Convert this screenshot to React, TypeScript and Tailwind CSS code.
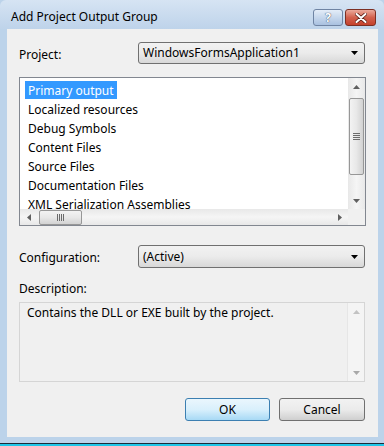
import React from 'react'

const items = [
    'Primary output',
    'Localized resources',
    'Debug Symbols',
    'Content Files',
    'Source Files',
    'Documentation Files',
    'XML Serialization Assemblies',
]

const font = { fontFamily: '"Noto Sans", "Open Sans", sans-serif' }

// small triangle used by combos and scrollbars
const Arrow = ({ dir, color = '#000', size = 7 }: { dir: 'up' | 'down' | 'left' | 'right'; color?: string; size?: number }) => {
    const pts = {
        up: '0,4 3.5,0 7,4',
        down: '0,0 7,0 3.5,4',
        left: '4,0 4,7 0,3.5',
        right: '0,0 0,7 4,3.5',
    }[dir]
    const vertical = dir === 'up' || dir === 'down'
    return (
        <svg width={vertical ? size : 4} height={vertical ? 4 : size} viewBox={vertical ? '0 0 7 4' : '0 0 4 7'}>
            <polygon points={pts} fill={color} />
        </svg>
    )
}

const Combo = ({ value }: { value: string }) => (
    <div className="flex h-full w-[227px] items-center justify-between rounded-[3px] border border-[#707070] bg-gradient-to-b from-[#f2f2f2] via-[#ebebeb] to-[#d8d8d8] pl-[4px] pr-[6px] text-[12px] text-black">
        <span>{value}</span>
        <Arrow dir="down" />
    </div>
)

const Grip = ({ vertical }: { vertical?: boolean }) =>
    vertical ? (
        <div className="flex flex-col gap-[1px]">
            <div className="h-px w-[7px] bg-[#6b6b6b]" />
            <div className="h-px w-[7px] bg-[#6b6b6b]" />
            <div className="h-px w-[7px] bg-[#6b6b6b]" />
            <div className="h-px w-[7px] bg-[#6b6b6b]" />
        </div>
    ) : (
        <div className="flex gap-[1px]">
            <div className="h-[7px] w-px bg-[#6b6b6b]" />
            <div className="h-[7px] w-px bg-[#6b6b6b]" />
            <div className="h-[7px] w-px bg-[#6b6b6b]" />
            <div className="h-[7px] w-px bg-[#6b6b6b]" />
        </div>
    )

const App = () => {
    return (
        <div style={font} className="flex h-[446px] w-[384px] flex-col bg-[#bcd3ea] text-[12px] text-black">
            {/* title bar */}
            <div className="flex h-[29px] shrink-0 items-start justify-between rounded-t-[6px] bg-gradient-to-b from-[#d6e4f3] to-[#bed3ea] pl-[11px] pr-[8px]">
                <span className="mt-[8px] text-[12px] text-black">Add Project Output Group</span>
                <div className="mt-[9px] flex gap-[2px]">
                    <div className="flex h-[17px] w-[30px] items-center justify-center rounded-[3px] border border-[#6f84a3] bg-gradient-to-b from-[#e4edf8] via-[#c6d7ec] to-[#a9c1e0]">
                        <span className="text-[12px] font-bold leading-none text-white [text-shadow:0_0_1px_#40536e,0_0_1px_#40536e]">?</span>
                    </div>
                    <div className="flex h-[17px] w-[31px] items-center justify-center rounded-[3px] border border-[#7c2f23] bg-gradient-to-b from-[#eaa99c] via-[#d2604d] to-[#c4412c]">
                        <svg width="12" height="10" viewBox="0 0 12 10">
                            <path d="M1.5 1 L10.5 9 M10.5 1 L1.5 9" stroke="#5a1f17" strokeWidth="3.6" strokeLinecap="round" />
                            <path d="M1.5 1 L10.5 9 M10.5 1 L1.5 9" stroke="#ffffff" strokeWidth="2" strokeLinecap="round" />
                        </svg>
                    </div>
                </div>
            </div>

            {/* client area */}
            <div className="mx-[6px] ml-[7px] flex h-[408px] shrink-0 flex-col bg-[#f0f0f0] pl-[12px] pr-[12px]">
                <div className="mt-[13px] flex h-[22px] items-center">
                    <span className="w-[119px] pt-[4px]">Project:</span>
                    <Combo value="WindowsFormsApplication1" />
                </div>

                {/* list box */}
                <div className="mt-[13px] flex h-[149px] w-[347px] flex-col border border-[#828790] bg-white">
                    <div className="flex h-[131px]">
                        <div className="flex flex-1 flex-col overflow-hidden pl-[5px] pt-[3px]">
                            {items.map((item, i) => (
                                <div key={item} className="flex h-[19px] shrink-0">
                                    <span className={i === 0 ? 'flex h-[18px] items-center bg-[#3399ff] px-[3px] pt-px text-white' : 'flex h-[18px] items-center px-[3px] pt-px'}>{item}</span>
                                </div>
                            ))}
                        </div>
                        <div className="flex w-[17px] flex-col items-center bg-gradient-to-r from-[#e8e8e8] via-[#f5f5f5] to-[#e8e8e8]">
                            <div className="flex h-[17px] items-center justify-center">
                                <Arrow dir="up" color="#606060" />
                            </div>
                            <div className="mt-[3px] flex h-[77px] w-[15px] items-center justify-center rounded-[2px] border border-[#979797] bg-gradient-to-r from-[#f3f3f3] via-[#e8e8e8] to-[#d2d2d2]">
                                <Grip vertical />
                            </div>
                            <div className="flex-1" />
                            <div className="flex h-[17px] items-center justify-center">
                                <Arrow dir="down" color="#606060" />
                            </div>
                        </div>
                    </div>
                    <div className="flex h-[16px]">
                        <div className="flex flex-1 items-center bg-gradient-to-b from-[#e8e8e8] via-[#f5f5f5] to-[#e8e8e8]">
                            <div className="flex w-[17px] items-center justify-center">
                                <Arrow dir="left" color="#606060" />
                            </div>
                            <div className="ml-[2px] flex h-[15px] w-[43px] items-center justify-center rounded-[2px] border border-[#979797] bg-gradient-to-b from-[#f3f3f3] via-[#e8e8e8] to-[#d2d2d2]">
                                <Grip />
                            </div>
                            <div className="flex-1" />
                            <div className="flex w-[17px] items-center justify-center">
                                <Arrow dir="right" color="#606060" />
                            </div>
                        </div>
                        <div className="w-[17px] bg-[#f0f0f0]" />
                    </div>
                </div>

                <div className="mt-[19px] flex h-[23px] items-center">
                    <span className="w-[119px] pt-[3px]">Configuration:</span>
                    <Combo value="(Active)" />
                </div>

                <div className="mt-[13px] h-[16px] leading-[16px]">Description:</div>

                {/* description box */}
                <div className="mt-[5px] flex h-[80px] w-[346px] border border-[#d5d5d5] bg-[#f0f0f0]">
                    <div className="flex-1 pl-[7px] pt-[1px]">Contains the DLL or EXE built by the project.</div>
                    <div className="flex w-[17px] flex-col items-center border-l border-[#e6e6e6] bg-[#f4f4f4]">
                        <div className="flex h-[17px] items-center justify-center">
                            <Arrow dir="up" color="#c2c2c2" />
                        </div>
                        <div className="flex-1" />
                        <div className="flex h-[17px] items-center justify-center">
                            <Arrow dir="down" color="#a8a8a8" />
                        </div>
                    </div>
                </div>

                <div className="mt-[16px] flex justify-end gap-[9px] pr-[1px]">
                    <div className="flex h-[23px] w-[85px] items-center justify-center rounded-[3px] border border-[#3c7fb1] bg-gradient-to-b from-[#eaf6fd] via-[#d9f0fc] to-[#a7d9f5]">
                        OK
                    </div>
                    <div className="flex h-[23px] w-[86px] items-center justify-center rounded-[3px] border border-[#707070] bg-gradient-to-b from-[#f2f2f2] via-[#ebebeb] to-[#cfcfcf]">
                        Cancel
                    </div>
                </div>
            </div>

            <div className="h-[6px] shrink-0" />
            <div className="h-px shrink-0 bg-[#1b2a3a]" />
            <div className="h-[2px] shrink-0 bg-[#1fc6e8]" />
        </div>
    )
}

export default App
